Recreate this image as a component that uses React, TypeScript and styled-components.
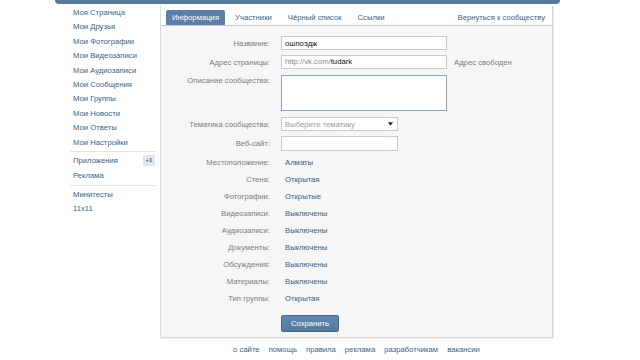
import styled, { createGlobalStyle } from "styled-components";

const GlobalStyle = createGlobalStyle`
	html, body {
		margin: 0;
		padding: 0;
		background: #ffffff;
	}
	body {
		font-family: "Liberation Sans", Arial, sans-serif;
		font-size: 7.7px;
		color: #000;
	}
`;

const menuMain = [
	"Моя Страница",
	"Мои Друзья",
	"Мои Фотографии",
	"Мои Видеозаписи",
	"Мои Аудиозаписи",
	"Мои Сообщения",
	"Мои Группы",
	"Мои Новости",
	"Мои Ответы",
	"Мои Настройки",
];

const infoRows = [
	{ label: "Местоположение:", value: "Алматы" },
	{ label: "Стена:", value: "Открытая" },
	{ label: "Фотографии:", value: "Открытые" },
	{ label: "Видеозаписи:", value: "Выключены" },
	{ label: "Аудиозаписи:", value: "Выключены" },
	{ label: "Документы:", value: "Выключены" },
	{ label: "Обсуждения:", value: "Выключены" },
	{ label: "Материалы:", value: "Выключены" },
	{ label: "Тип группы:", value: "Открытая" },
];

const footerLinks = ["о сайте", "помощь", "правила", "реклама", "разработчикам", "вакансии"];

const LINK = "#3b5f84";

export default function App() {
	return (
		<Page>
			<GlobalStyle />
			<TopBar />
			<Body>
				<Sidebar>
					{menuMain.map((item) => (
						<MenuItem key={item}>{item}</MenuItem>
					))}
					<MenuDivider />
					<MenuItem>
						Приложения
						<Badge>+1</Badge>
					</MenuItem>
					<MenuItem>Реклама</MenuItem>
					<MenuDivider />
					<MenuItem>Минитесты</MenuItem>
					<MenuItem>11x11</MenuItem>
				</Sidebar>

				<Column>
					<Panel>
						<TabBar>
							<Tab $active>Информация</Tab>
							<Tab>Участники</Tab>
							<Tab>Чёрный список</Tab>
							<Tab>Ссылки</Tab>
							<BackLink>Вернуться к сообществу</BackLink>
						</TabBar>

						<Form>
							<FieldRow $mt={10}>
								<Label>Название:</Label>
								<TextInput value="ошпоэдж" readOnly />
							</FieldRow>
							<FieldRow $mt={5}>
								<Label>Адрес страницы:</Label>
								<ValueLine>
									<AddressBox>
										<Prefix>http://vk.com/</Prefix>
										<span>tudark</span>
									</AddressBox>
									<Hint>Адрес свободен</Hint>
								</ValueLine>
							</FieldRow>
							<FieldRow $mt={6} $top>
								<Label $top>Описание сообщества:</Label>
								<TextArea />
							</FieldRow>
							<FieldRow $mt={6}>
								<Label>Тематика сообщества:</Label>
								<SelectBox>
									<span>Выберите тематику</span>
									<Caret viewBox="0 0 6 4">
										<path d="M0 0 H6 L3 4 Z" fill="#222" />
									</Caret>
								</SelectBox>
							</FieldRow>
							<FieldRow $mt={5}>
								<Label>Веб-сайт:</Label>
								<ShortInput />
							</FieldRow>

							<InfoList>
								{infoRows.map((row) => (
									<InfoRow key={row.label}>
										<Label>{row.label}</Label>
										<Value>{row.value}</Value>
									</InfoRow>
								))}
							</InfoList>

							<ButtonRow>
								<span />
								<SaveButton>Сохранить</SaveButton>
							</ButtonRow>
						</Form>
					</Panel>

					<Footer>
						{footerLinks.map((link) => (
							<FooterLink key={link}>{link}</FooterLink>
						))}
					</Footer>
				</Column>
			</Body>
		</Page>
	);
}

const Page = styled.div`
	width: 640px;
	height: 360px;
	overflow: hidden;
	background: #fff;
`;

const TopBar = styled.div`
	margin-left: 55px;
	width: 505px;
	height: 4px;
	background: #56799f;
	border-radius: 0 0 5px 5px;
`;

const Body = styled.div`
	display: flex;
	align-items: flex-start;
	padding-top: 2px;
	padding-left: 70px;
`;

const Sidebar = styled.div`
	width: 86px;
	display: flex;
	flex-direction: column;
	margin-right: 4px;
`;

const MenuItem = styled.div`
	position: relative;
	height: 14.4px;
	line-height: 14.4px;
	padding-left: 3px;
	color: ${LINK};
	font-size: 7.7px;
	white-space: nowrap;
`;

const MenuDivider = styled.div`
	height: 0;
	border-top: 1px solid #dfe3e8;
	margin: 1.5px 0 2px;
`;

const Badge = styled.span`
	position: absolute;
	right: 1px;
	top: 1px;
	width: 12px;
	height: 11px;
	line-height: 11px;
	text-align: center;
	background: #e1e6ec;
	color: #45688e;
	font-size: 6px;
	font-weight: bold;
`;

const Column = styled.div`
	display: flex;
	flex-direction: column;
	width: 393px;
`;

const Panel = styled.div`
	box-sizing: border-box;
	height: 332px;
	background: #f5f6f5;
	border-left: 1px solid #dcdcdc;
	border-right: 1px solid #d4d4d4;
	border-bottom: 1px solid #d8d8d8;
	box-shadow: 1px 0 0 #ececec, 1px 1px 0 #eeeeee;
	display: flex;
	flex-direction: column;
`;

const TabBar = styled.div`
	display: flex;
	align-items: flex-end;
	height: 19px;
	padding-left: 5px;
	padding-right: 7px;
	background: #fff;
	border-bottom: 1px solid #c5ccd4;
`;

const Tab = styled.div<{ $active?: boolean }>`
	height: 15px;
	line-height: 15px;
	padding: 0 ${({ $active }) => ($active ? "6px" : "8px")};
	margin-right: ${({ $active }) => ($active ? "2px" : "0")};
	font-size: 7.7px;
	color: ${({ $active }) => ($active ? "#ffffff" : LINK)};
	background: ${({ $active }) => ($active ? "#5b7fa6" : "transparent")};
	border-radius: 2px 2px 0 0;
	white-space: nowrap;
`;

const BackLink = styled.div`
	margin-left: auto;
	height: 15px;
	line-height: 15px;
	font-size: 7.7px;
	color: ${LINK};
	white-space: nowrap;
`;

const Form = styled.div`
	display: flex;
	flex-direction: column;
`;

const FieldRow = styled.div<{ $mt: number; $top?: boolean }>`
	display: grid;
	grid-template-columns: 109px 1fr;
	column-gap: 11px;
	align-items: ${({ $top }) => ($top ? "start" : "center")};
	margin-top: ${({ $mt }) => $mt}px;
`;

const Label = styled.div<{ $top?: boolean }>`
	text-align: right;
	color: #7d7d7d;
	font-size: 7.7px;
	white-space: nowrap;
	padding-top: ${({ $top }) => ($top ? "1px" : "0")};
`;

const inputBase = `
	box-sizing: border-box;
	height: 14px;
	margin: 0;
	padding: 0 3px;
	background: #fff;
	border: 1px solid #c3cbd4;
	border-radius: 0;
	font-family: "Liberation Sans", Arial, sans-serif;
	font-size: 7.7px;
	color: #111;
	outline: none;
`;

const TextInput = styled.input`
	${inputBase}
	width: 166px;
`;

const ShortInput = styled.input`
	${inputBase}
	width: 117px;
	height: 15px;
`;

const ValueLine = styled.div`
	display: flex;
	align-items: center;
	gap: 7px;
`;

const AddressBox = styled.div`
	${inputBase}
	width: 166px;
	display: flex;
	align-items: center;
	line-height: 12px;
`;

const Prefix = styled.span`
	color: #8a8a8a;
`;

const Hint = styled.span`
	color: #7d7d7d;
	font-size: 7.7px;
`;

const TextArea = styled.textarea`
	box-sizing: border-box;
	width: 166px;
	height: 36px;
	margin: 0;
	padding: 2px 3px;
	border: 1px solid #8ea6c2;
	background: #fff;
	resize: none;
	outline: none;
	display: block;
`;

const SelectBox = styled.div`
	${inputBase}
	width: 117px;
	display: flex;
	align-items: center;
	justify-content: space-between;
	color: #9a9a9a;
	padding: 0 4px 0 3px;
`;

const Caret = styled.svg`
	width: 5px;
	height: 4px;
`;

const InfoList = styled.div`
	display: flex;
	flex-direction: column;
	margin-top: 3px;
`;

const InfoRow = styled.div`
	display: grid;
	grid-template-columns: 109px 1fr;
	column-gap: 15px;
	align-items: center;
	height: 17px;
`;

const Value = styled.div`
	color: ${LINK};
	font-size: 7.7px;
`;

const ButtonRow = styled.div`
	display: grid;
	grid-template-columns: 109px 1fr;
	column-gap: 11px;
	margin-top: 8px;
`;

const SaveButton = styled.button`
	box-sizing: border-box;
	width: 58px;
	height: 17px;
	padding: 0;
	background: linear-gradient(#6489b0, #54799f);
	border: 1px solid #48698f;
	border-radius: 2px;
	color: #fff;
	font-family: "Liberation Sans", Arial, sans-serif;
	font-size: 7.7px;
`;

const Footer = styled.div`
	display: flex;
	justify-content: center;
	gap: 9px;
	margin-top: 5px;
	height: 14px;
	line-height: 14px;
`;

const FooterLink = styled.span`
	color: ${LINK};
	font-size: 7.7px;
`;
